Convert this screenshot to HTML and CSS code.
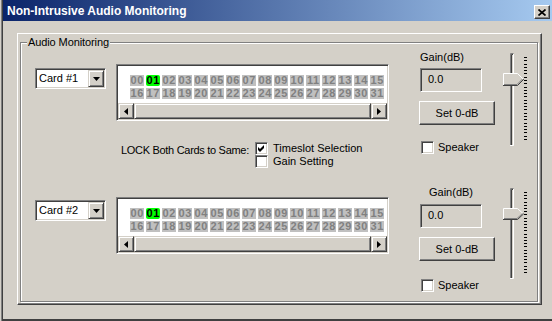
FILE: index.html
```html
<!DOCTYPE html>
<html>
<head>
<meta charset="utf-8">
<link rel="stylesheet" href="styles.css">
</head>
<body>
<div class="window">
  <div class="titlebar">
    <span class="title">Non-Intrusive Audio Monitoring</span>
    <div class="close"><svg width="8" height="7" viewBox="0 0 8 7"><path d="M0.5 0.5 L7.5 6.5 M7.5 0.5 L0.5 6.5" stroke="#000" stroke-width="1.7" fill="none"/></svg></div>
  </div>
  <div class="client">
    <div class="panel">
      <div class="group">
        <span class="group-label">Audio Monitoring</span>
        <div class="left">
          <div class="card-row row1">
            <div class="combo"><span class="combo-text">Card #1</span><div class="combo-btn"><svg width="7" height="4" viewBox="0 0 7 4"><polygon points="0,0 7,0 3.5,4" fill="#000"/></svg></div></div>
            <div class="listbox">
              <div class="slots">
                <span>00</span><span class="on">01</span><span>02</span><span>03</span><span>04</span><span>05</span><span>06</span><span>07</span><span>08</span><span>09</span><span>10</span><span>11</span><span>12</span><span>13</span><span>14</span><span>15</span>
                <span>16</span><span>17</span><span>18</span><span>19</span><span>20</span><span>21</span><span>22</span><span>23</span><span>24</span><span>25</span><span>26</span><span>27</span><span>28</span><span>29</span><span>30</span><span>31</span>
              </div>
              <div class="hscroll">
                <div class="sbtn"><svg width="4" height="7" viewBox="0 0 4 7"><polygon points="4,0 4,7 0,3.5" fill="#000"/></svg></div>
                <div class="sthumb"></div>
                <div class="sbtn"><svg width="4" height="7" viewBox="0 0 4 7"><polygon points="0,0 0,7 4,3.5" fill="#000"/></svg></div>
              </div>
            </div>
          </div>
          <div class="lock">
            <span class="lock-label">LOCK Both Cards to Same:</span>
            <div class="checks">
              <div class="check-line"><span class="checkbox"><svg width="9" height="9" viewBox="0 0 9 9"><polygon points="1,3 3,5 7,1 7,4 3,8 1,6" fill="#000"/></svg></span><span>Timeslot Selection</span></div>
              <div class="check-line"><span class="checkbox"></span><span>Gain Setting</span></div>
            </div>
          </div>
          <div class="card-row row2">
            <div class="combo"><span class="combo-text">Card #2</span><div class="combo-btn"><svg width="7" height="4" viewBox="0 0 7 4"><polygon points="0,0 7,0 3.5,4" fill="#000"/></svg></div></div>
            <div class="listbox">
              <div class="slots">
                <span>00</span><span class="on">01</span><span>02</span><span>03</span><span>04</span><span>05</span><span>06</span><span>07</span><span>08</span><span>09</span><span>10</span><span>11</span><span>12</span><span>13</span><span>14</span><span>15</span>
                <span>16</span><span>17</span><span>18</span><span>19</span><span>20</span><span>21</span><span>22</span><span>23</span><span>24</span><span>25</span><span>26</span><span>27</span><span>28</span><span>29</span><span>30</span><span>31</span>
              </div>
              <div class="hscroll">
                <div class="sbtn"><svg width="4" height="7" viewBox="0 0 4 7"><polygon points="4,0 4,7 0,3.5" fill="#000"/></svg></div>
                <div class="sthumb"></div>
                <div class="sbtn"><svg width="4" height="7" viewBox="0 0 4 7"><polygon points="0,0 0,7 4,3.5" fill="#000"/></svg></div>
              </div>
            </div>
          </div>
        </div>
        <div class="right">
          <div class="gain g1">
            <div class="controls">
              <span class="gain-label">Gain(dB)</span>
              <div class="gain-box">0.0</div>
              <div class="set-btn">Set 0-dB</div>
              <div class="speaker"><span class="checkbox"></span><span>Speaker</span></div>
            </div>
            <svg class="slider" width="26" height="93" viewBox="0 0 26 93">
              <rect x="7" y="0" width="4" height="93" fill="#d4d0c8"/>
              <path d="M7.5 93 V0.5 H10.5" stroke="#808080" fill="none"/>
              <path d="M8.5 92 V1.5 H10" stroke="#404040" fill="none"/>
              <path d="M10.5 1 V92.5 H7" stroke="#fff" fill="none"/>
              <polygon points="0,20 14,20 20,26 14,32 0,32" fill="#d4d0c8"/>
              <path d="M0.5 32 V20.5 H14.5 L20 26" stroke="#fff" fill="none"/>
              <path d="M0 32.5 H14.5 L20.8 26.2" stroke="#404040" fill="none"/>
              <path d="M1 31.5 H14 L19.5 26" stroke="#808080" fill="none"/>
              <path d="M21 4.5h3M21 7.5h3M21 11.5h3M21 14.5h3M21 17.5h3M21 20.5h3M21 24.5h3M21 27.5h3M21 30.5h3M21 34.5h3M21 37.5h3M21 40.5h3M21 43.5h3M21 47.5h3M21 50.5h3M21 53.5h3M21 56.5h3M21 60.5h3M21 63.5h3M21 66.5h3M21 70.5h3M21 73.5h3M21 76.5h3M21 79.5h3M21 83.5h3M21 86.5h3" stroke="#000" fill="none"/>
            </svg>
          </div>
          <div class="gain g2">
            <div class="controls">
              <span class="gain-label">Gain(dB)</span>
              <div class="gain-box">0.0</div>
              <div class="set-btn">Set 0-dB</div>
              <div class="speaker"><span class="checkbox"></span><span>Speaker</span></div>
            </div>
            <svg class="slider" width="26" height="91" viewBox="0 0 26 91">
              <rect x="7" y="0" width="4" height="91" fill="#d4d0c8"/>
              <path d="M7.5 91 V0.5 H10.5" stroke="#808080" fill="none"/>
              <path d="M8.5 90 V1.5 H10" stroke="#404040" fill="none"/>
              <path d="M10.5 1 V90.5 H7" stroke="#fff" fill="none"/>
              <polygon points="0,20 14,20 20,25.5 14,31 0,31" fill="#d4d0c8"/>
              <path d="M0.5 31 V20.5 H14.5 L20 25.5" stroke="#fff" fill="none"/>
              <path d="M0 31.5 H14.5 L20.8 25.7" stroke="#404040" fill="none"/>
              <path d="M1 30.5 H14 L19.5 25.5" stroke="#808080" fill="none"/>
              <path d="M21 4.5h3M21 7.5h3M21 10.5h3M21 14.5h3M21 17.5h3M21 20.5h3M21 23.5h3M21 26.5h3M21 30.5h3M21 33.5h3M21 36.5h3M21 39.5h3M21 42.5h3M21 46.5h3M21 49.5h3M21 52.5h3M21 55.5h3M21 58.5h3M21 62.5h3M21 65.5h3M21 68.5h3M21 71.5h3M21 74.5h3M21 78.5h3M21 81.5h3M21 84.5h3" stroke="#000" fill="none"/>
            </svg>
          </div>
        </div>
      </div>
    </div>
  </div>
</div>
</body>
</html>
```
FILE: styles.css
```css
* { box-sizing: border-box; }
body {
  margin: 0;
  background: #d4d0c8;
  font-family: "Liberation Sans", Arial, sans-serif;
  font-size: 11px;
  color: #000;
}
.window {
  width: 552px;
  height: 321px;
  background: #d4d0c8;
  padding-left: 3px;
  overflow: hidden;
  box-shadow: inset 1px 0 #d4d0c8, inset 2px 0 #808080, inset 3px 0 #404040, inset 0 -2px #404040;
}
.titlebar {
  height: 21px;
  display: flex;
  justify-content: space-between;
  align-items: flex-start;
  padding: 0 2px 0 4px;
  background: linear-gradient(to right, #0a246a, #a6caf0);
}
.title {
  margin-top: 4px;
  line-height: 14px;
  font-size: 12px;
  font-weight: bold;
  color: #fff;
  white-space: nowrap;
}
.close {
  width: 16px;
  height: 14px;
  margin-top: 5px;
  display: flex;
  align-items: center;
  justify-content: center;
  background: #d4d0c8;
  border: 1px solid;
  border-color: #fff #404040 #404040 #fff;
  box-shadow: inset -1px -1px #808080;
}
.close svg { display: block; }
.client { padding: 12px 0 0 14px; }
.panel {
  width: 525px;
  height: 272px;
  border: 1px solid;
  border-color: #fff #404040 #404040 #fff;
  box-shadow: inset -1px -1px #808080;
  padding: 8px 0 0 2px;
}
.group {
  position: relative;
  width: 518px;
  height: 260px;
  border: 1px solid #808080;
  box-shadow: inset 1px 1px #fff, 1px 1px #fff;
  display: grid;
  grid-template-columns: 398px 1fr;
  align-items: start;
}
.group-label {
  position: absolute;
  top: -7px;
  left: 6px;
  padding: 0 1px;
  line-height: 13px;
  background: #d4d0c8;
  letter-spacing: -0.1px;
}
.card-row {
  display: flex;
  align-items: flex-start;
  gap: 10px;
  padding-left: 14px;
}
.row1 { margin-top: 21px; }
.row2 { margin-top: 29px; }
.combo {
  width: 71px;
  height: 21px;
  display: flex;
  align-items: center;
  justify-content: space-between;
  background: #fff;
  border: 1px solid;
  border-color: #808080 #fff #fff #808080;
  box-shadow: inset 1px 1px #404040, inset -1px -1px #d4d0c8;
  padding: 1px;
}
.row1 .combo { margin-top: 4px; }
.row2 .combo { margin-top: 3px; }
.combo-text { padding-left: 2px; line-height: 13px; }
.combo-btn {
  width: 16px;
  height: 17px;
  display: flex;
  align-items: center;
  justify-content: center;
  background: #d4d0c8;
  border: 1px solid;
  border-color: #d4d0c8 #404040 #404040 #d4d0c8;
  box-shadow: inset 1px 1px #fff, inset -1px -1px #808080;
}
.combo-btn svg, .sbtn svg { display: block; }
.listbox {
  width: 273px;
  height: 57px;
  background: #fff;
  border: 1px solid;
  border-color: #808080 #fff #fff #808080;
  box-shadow: inset 1px 1px #404040, inset -1px -1px #d4d0c8;
  padding: 1px;
  display: flex;
  flex-direction: column;
}
.slots {
  height: 37px;
  padding: 9px 0 0 12px;
  display: grid;
  grid-template-columns: repeat(16, 14px);
  grid-auto-rows: 11px;
  column-gap: 2px;
  row-gap: 2px;
  overflow: hidden;
}
.slots span {
  background: #c0c0c0;
  color: #808080;
  font-weight: bold;
  font-size: 11px;
  line-height: 11px;
  letter-spacing: 0.6px;
  text-indent: 0.6px;
  text-align: center;
  white-space: nowrap;
}
.slots span.on {
  background: #00ff00;
  color: #000;
  border-radius: 2px;
}
.hscroll {
  height: 16px;
  display: flex;
  background: #e8e6e1;
}
.sbtn, .sthumb {
  height: 16px;
  background: #d4d0c8;
  border: 1px solid;
  border-color: #d4d0c8 #404040 #404040 #d4d0c8;
  box-shadow: inset 1px 1px #fff, inset -1px -1px #808080;
}
.sbtn {
  width: 16px;
  display: flex;
  align-items: center;
  justify-content: center;
}
.sthumb { flex: 1; }
.lock {
  display: flex;
  margin-top: 21px;
  padding-left: 100px;
}
.lock-label {
  width: 134px;
  margin-top: 2px;
  line-height: 13px;
  white-space: nowrap;
  letter-spacing: -0.3px;
}
.checks { display: flex; flex-direction: column; }
.check-line {
  display: flex;
  align-items: center;
  gap: 5px;
  height: 13px;
  line-height: 13px;
  white-space: nowrap;
}
.checkbox {
  width: 13px;
  height: 13px;
  flex: none;
  display: flex;
  align-items: center;
  justify-content: center;
  background: #fff;
  border: 1px solid;
  border-color: #808080 #fff #fff #808080;
  box-shadow: inset 1px 1px #404040, inset -1px -1px #d4d0c8;
}
.checkbox svg { display: block; }
.gain {
  display: flex;
  align-items: flex-start;
}
.g1 { margin-top: 8px; }
.g2 { margin-top: 32px; }
.controls {
  width: 76px;
  display: flex;
  flex-direction: column;
  align-items: flex-start;
}
.gain-label { line-height: 13px; padding-left: 1px; }
.g2 .gain-label { padding-left: 10px; }
.gain-box {
  width: 62px;
  height: 24px;
  margin: 4px 0 0 1px;
  padding-left: 7px;
  line-height: 20px;
  border: 1px solid;
  border-color: #808080 #fff #fff #808080;
  box-shadow: inset 1px 1px #404040, inset -1px -1px #d4d0c8;
}
.g2 .gain-box { margin-top: 5px; }
.set-btn {
  width: 76px;
  height: 24px;
  margin-top: 9px;
  text-align: center;
  line-height: 22px;
  border: 1px solid;
  border-color: #fff #404040 #404040 #fff;
  box-shadow: inset -1px -1px #808080;
}
.speaker {
  display: flex;
  align-items: center;
  gap: 4px;
  height: 13px;
  line-height: 13px;
  margin: 16px 0 0 2px;
}
.g2 .speaker { margin-top: 18px; }
.slider {
  display: block;
  margin: 2px 0 0 8px;
}
```
